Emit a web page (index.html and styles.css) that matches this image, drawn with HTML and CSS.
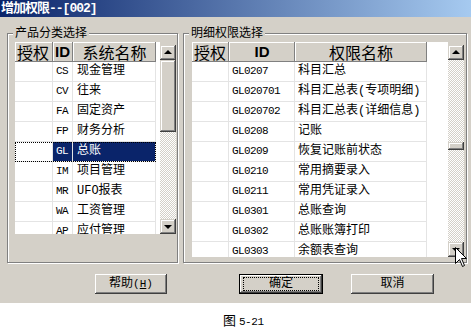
FILE: index.html
```html
<!DOCTYPE html>
<html>
  <head>
    <meta charset="utf-8" />
    <title>增加权限</title>
    <link rel="stylesheet" href="styles.css">
  </head>
  <body>
    <div class="window">
      <div class="titlebar">增加权限--[002]</div>
      <div class="groups">
        <div class="group group-left">
          <span class="group-title">产品分类选择</span>
          <div class="grid">
            <div class="sheet">
              <table class="tbl-left">
                <colgroup>
                  <col class="c-auth-l" />
                  <col class="c-id-l" />
                  <col class="c-name-l" />
                </colgroup>
                <tr>
                  <th class="auth">授权</th>
                  <th class="id">ID</th>
                  <th>系统名称</th>
                </tr>
                <tr><td></td><td class="code">CS</td><td class="name">现金管理</td></tr>
                <tr><td></td><td class="code">CV</td><td class="name">往来</td></tr>
                <tr><td></td><td class="code">FA</td><td class="name">固定资产</td></tr>
                <tr><td></td><td class="code">FP</td><td class="name">财务分析</td></tr>
                <tr class="sel"><td class="auth"></td><td class="code">GL</td><td class="name">总账</td></tr>
                <tr><td></td><td class="code">IM</td><td class="name">项目管理</td></tr>
                <tr><td></td><td class="code">MR</td><td class="name">UFO报表</td></tr>
                <tr><td></td><td class="code">WA</td><td class="name">工资管理</td></tr>
                <tr><td></td><td class="code">AP</td><td class="name">应付管理</td></tr>
              </table>
            </div>
            <div class="vscroll vscroll-left">
              <div class="sbtn up"></div>
              <div class="thumb thumb-left"></div>
              <div class="track"></div>
              <div class="sbtn down"></div>
            </div>
          </div>
        </div>

        <div class="group group-right">
          <span class="group-title">明细权限选择</span>
          <div class="grid">
            <div class="sheet">
              <table class="tbl-right">
                <colgroup>
                  <col class="c-auth-r" />
                  <col class="c-id-r" />
                  <col class="c-name-r" />
                </colgroup>
                <tr>
                  <th class="auth">授权</th>
                  <th class="id">ID</th>
                  <th>权限名称</th>
                </tr>
                <tr><td></td><td class="code">GL0207</td><td class="name">科目汇总</td></tr>
                <tr><td></td><td class="code">GL020701</td><td class="name">科目汇总表(专项明细)</td></tr>
                <tr><td></td><td class="code">GL020702</td><td class="name">科目汇总表(详细信息)</td></tr>
                <tr><td></td><td class="code">GL0208</td><td class="name">记账</td></tr>
                <tr><td></td><td class="code">GL0209</td><td class="name">恢复记账前状态</td></tr>
                <tr><td></td><td class="code">GL0210</td><td class="name">常用摘要录入</td></tr>
                <tr><td></td><td class="code">GL0211</td><td class="name">常用凭证录入</td></tr>
                <tr><td></td><td class="code">GL0301</td><td class="name">总账查询</td></tr>
                <tr><td></td><td class="code">GL0302</td><td class="name">总账账簿打印</td></tr>
                <tr><td></td><td class="code">GL0303</td><td class="name">余额表查询</td></tr>
              </table>
            </div>
            <div class="vscroll vscroll-right">
              <div class="sbtn up"></div>
              <div class="track track-top"></div>
              <div class="thumb thumb-right"></div>
              <div class="track"></div>
              <div class="sbtn down"></div>
            </div>
          </div>
        </div>
      </div>

      <div class="buttons">
        <button class="btn btn-help">帮助<span class="key">(<u>H</u>)</span></button>
        <button class="btn btn-ok"><span class="focus">确定</span></button>
        <button class="btn btn-cancel">取消</button>
      </div>
    </div>

    <p class="figure">图 <span class="num">5-21</span></p>

    <!-- mouse pointer over the scroll button -->
    <svg class="pointer" width="13" height="21" viewBox="0 0 13 21">
      <polygon points="0.5,0.5 0.5,16.5 4.5,12.5 7.5,19.5 9.5,18.5 6.5,11.5 11.5,11.5" fill="#fff" stroke="#000" stroke-width="1" />
    </svg>
  </body>
</html>
```

FILE: styles.css
```css
body {
  margin: 0;
  width: 471px;
  height: 332px;
  overflow: hidden;
  position: relative;
  background: #fff;
  font-family: "Noto Sans CJK SC", sans-serif;
  color: #000;
}

.window {
  height: 303px;
  background: #d4d0c8;
}

.titlebar {
  height: 17px;
  padding-left: 1px;
  background: linear-gradient(to right, #0a246a, #a6caf0);
  color: #fff;
  font: bold 13px/17px "Liberation Mono", "Noto Sans CJK SC", monospace;
  letter-spacing: -1px;
}

/* group boxes */
.groups {
  display: flex;
  gap: 5px;
  padding: 16px 0 0 7px;
}

.group {
  position: relative;
  box-sizing: border-box;
  height: 230px;
  padding-top: 8px;
  border: 1px solid #808080;
  box-shadow: inset 1px 1px #fff, 1px 1px #fff;
}

.group-left {
  width: 171px;
  padding-left: 7px;
}

.group-right {
  width: 284px;
  padding-left: 8px;
}

.group-title {
  position: absolute;
  top: -9px;
  left: 5px;
  padding: 0 2px;
  background: #d4d0c8;
  font-size: 12px;
  line-height: 14px;
}

.grid {
  display: flex;
}

.sheet {
  background: #fff;
  overflow: hidden;
}

.group-left .sheet {
  width: 145px;
  height: 192px;
}

.group-right .sheet {
  width: 256px;
  height: 215px;
}

/* tables */
table {
  border-collapse: separate;
  border-spacing: 0;
  table-layout: fixed;
}

.tbl-left {
  width: 141px;
}

.tbl-right {
  width: 235px;
}

.c-auth-l { width: 38px; }
.c-id-l { width: 20px; }
.c-name-l { width: 83px; }
.c-auth-r { width: 37px; }
.c-id-r { width: 66px; }
.c-name-r { width: 132px; }

th {
  height: 20px;
  padding: 0;
  background: #d4d0c8;
  box-shadow: inset -1px -1px #808080, inset 1px 1px #fff;
  font-weight: normal;
  font-size: 16px;
  line-height: 20px;
  text-align: center;
  white-space: nowrap;
}

th.auth {
  text-align: left;
  padding-left: 2px;
}

th.id {
  font: bold 15px/20px "Liberation Sans", sans-serif;
}

.tbl-left th.id {
  text-align: left;
  padding-left: 2px;
}

td {
  height: 17px;
  padding: 2px 0 0;
  vertical-align: top;
  line-height: 15px;
  border-right: 1px solid #e4e4e4;
  border-bottom: 1px solid #e4e4e4;
  white-space: nowrap;
  overflow: hidden;
}

td.code {
  padding-left: 3px;
  font: 11px/15px "Liberation Mono", monospace;
  letter-spacing: -0.6px;
}

td.name {
  padding-left: 3px;
  font: 12px/15px "Liberation Mono", "Noto Sans CJK SC", monospace;
}

.tbl-left td.name {
  padding-left: 4px;
}

tr.sel td {
  background: #0a246a;
  color: #fff;
}

tr.sel td.auth {
  background: #fff;
}

tr.sel {
  outline: 1px dotted #000;
  outline-offset: -1px;
}

/* scroll bars */
.vscroll {
  width: 16px;
  margin-top: 3px;
  display: flex;
  flex-direction: column;
}

.vscroll-left {
  height: 189px;
}

.vscroll-right {
  height: 212px;
}

.sbtn,
.thumb {
  background: #d4d0c8;
  box-shadow: inset -1px -1px #404040, inset 1px 1px #d4d0c8,
    inset -2px -2px #808080, inset 2px 2px #fff;
}

.sbtn {
  height: 15px;
  position: relative;
}

.sbtn::after {
  content: "";
  position: absolute;
  left: 4px;
  border-left: 4px solid transparent;
  border-right: 4px solid transparent;
}

.up::after {
  top: 5px;
  border-bottom: 4px solid #000;
}

.down::after {
  top: 6px;
  border-top: 4px solid #000;
}

.track {
  flex: 1;
  background-color: #fff;
  background-image: conic-gradient(#d4d0c8 25%, #fff 0 50%, #d4d0c8 0 75%, #fff 0);
  background-size: 2px 2px;
}

.track-top {
  flex: none;
  height: 82px;
}

.thumb-left {
  height: 72px;
}

.thumb-right {
  height: 8px;
}

/* buttons */
.buttons {
  display: flex;
  padding: 11px 0 0 95px;
}

.btn {
  height: 20px;
  padding: 0;
  border: none;
  background: #d4d0c8;
  box-shadow: inset -1px -1px #404040, inset 1px 1px #fff,
    inset -2px -2px #808080, inset 2px 2px #d4d0c8;
  font: 12px/20px "Liberation Mono", "Noto Sans CJK SC", monospace;
  color: #000;
}

.btn-help {
  width: 72px;
}

.key {
  font-size: 11px;
}

.btn-ok {
  width: 84px;
  margin-left: 72px;
  border: 1px solid #000;
  box-shadow: inset -1px -1px #404040, inset 1px 1px #fff,
    inset -2px -2px #808080;
}

.focus {
  display: block;
  margin: 0 3px;
  height: 12px;
  line-height: 12px;
  border: 1px dotted #000;
}

.btn-cancel {
  width: 83px;
  margin-left: 28px;
}

.figure {
  margin: 0;
  padding: 9px 0 0 223px;
  font: 13px/16px "Noto Sans CJK SC", sans-serif;
}

.num {
  font: 11px "Liberation Mono", monospace;
  letter-spacing: -0.4px;
}

.pointer {
  position: absolute;
  left: 455px;
  top: 247px;
}
```
